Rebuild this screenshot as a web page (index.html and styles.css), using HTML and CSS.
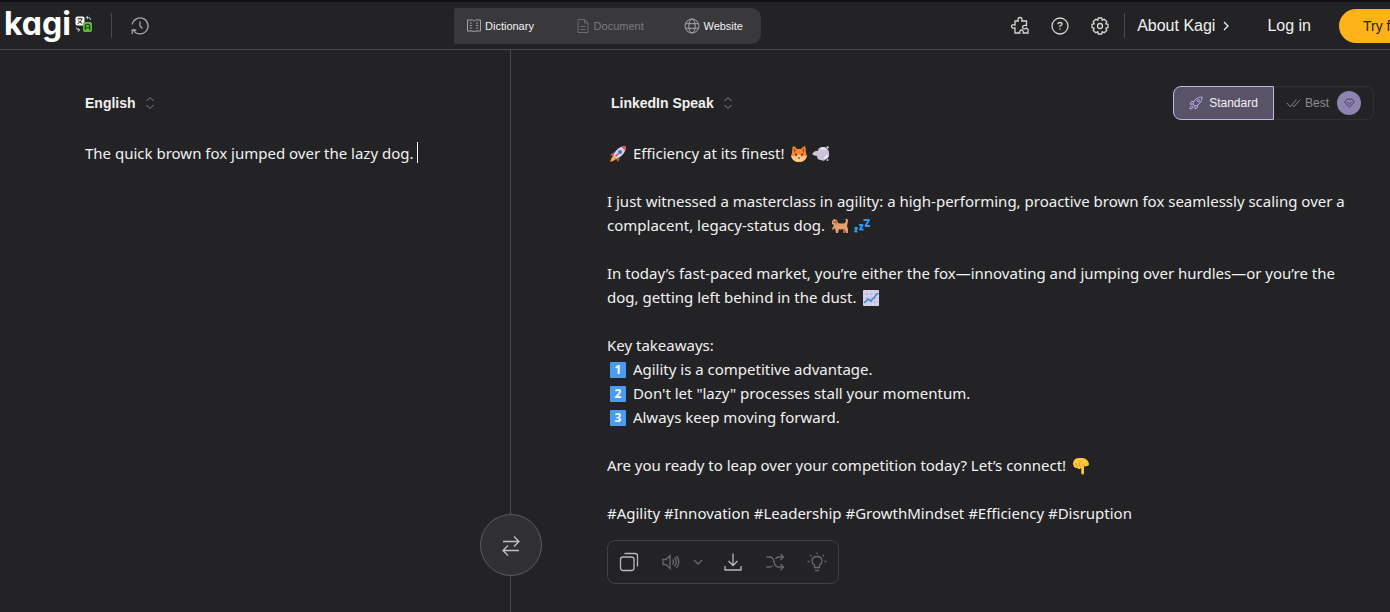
FILE: index.html
```html
<!DOCTYPE html>
<html lang="en">
<head>
<meta charset="UTF-8">
<meta name="viewport" content="width=device-width, initial-scale=1">
<title>Kagi Translate</title>
<link rel="stylesheet" href="styles.css">
</head>
<body>

<header class="topbar">
    <a class="logo" href="#" aria-label="Kagi Translate">
        <span class="logo-text">kagi</span>
        <svg class="logo-mark" viewBox="0 0 18 18">
            <rect x="0.5" y="1.5" width="9" height="9" rx="1.8" fill="#fff"/>
            <path d="M2.5 3.8h5M5 2.8v1M2.7 8.3c2.5-.5 3.6-2 3.9-4.3M3.5 5.4c.8 1.5 2 2.500 3.700 2.900" stroke="#222" stroke-width="1" fill="none"/>
            <rect x="8" y="7" width="9" height="10" rx="1.800" fill="#5fb83c"/>
            <path d="M10.200 15V11.500q0-2.300 2.300-2.300t2.300 2.300V15M10.200 12.700h4.600" stroke="#1e3a18" stroke-width="1.100" fill="none"/>
            <path d="M11.500 2.500h2q2 0 2 2.500M13 .8l-1.700 1.700L13 4.200M1.500 12.500q0 2.500 2.500 2.500M3 13.200L4.800 15 3 16.800" stroke="#ccc" stroke-width="1" fill="none"/>
        </svg>
    </a>
    <span class="rule"></span>
    <button class="icon-btn history" aria-label="History">
        <svg viewBox="0 0 20 20"><path d="M3.500 14.500A8 8 0 1 0 2.200 8.500M2.200 18v-4h4M10 5.500V10l2.500 2.500"/></svg>
    </button>

    <nav class="modes">
        <a href="#"><svg viewBox="0 0 16 16"><path d="M8 3.300C7.500 2.300 7 2 6 2H1.500v11H6c1 0 1.500.2 2 1 .5-.8 1-1 2-1h4.500V2H10c-1 0-1.500.3-2 1.300zM3.800 5h2M3.800 7.500h2M3.800 10h2M10.200 5h2M10.200 7.500h2M10.200 10h2"/></svg>Dictionary</a>
        <a href="#" class="off"><svg viewBox="0 0 16 16"><path d="M3 1.500h6.500L13 5v9.500H3zM9.500 1.500V5H13M5.500 8.500h5M5.500 11.500h5"/></svg>Document</a>
        <a href="#"><svg viewBox="0 0 16 16"><circle cx="8" cy="8" r="7"/><ellipse cx="8" cy="8" rx="3.200" ry="7"/><path d="M1.500 5.700h13M1.500 10.300h13"/></svg>Website</a>
    </nav>

    <div class="actions">
        <button class="icon-btn" aria-label="Extensions">
            <svg viewBox="0 0 20 20"><path d="M5 5h3.200C7.600 2.700 8.300 1.500 10 1.500s2.400 1.200 1.800 3.500H16.500v4.500c-2.300-.5-4 .3-4 1.700s1.700 2.300 3.300 1.300l.7-.5 1.500 1.500v3.500h-4.800c.3-2-.5-3-1.700-3s-2 1-1.700 3H5v-5c-2.300.6-3.500-.3-3.500-1.800S2.700 8.600 5 9z"/></svg>
        </button>
        <button class="icon-btn" aria-label="Help">
            <svg viewBox="0 0 20 20"><circle cx="10" cy="10" r="8"/><path d="M8 8.300q0-1.800 2-1.800t2 1.700q0 1-2 1.800v1.200M10 12.500v1.300"/></svg>
        </button>
        <button class="icon-btn" aria-label="Settings">
            <svg viewBox="0 0 20 20"><path d="M8.300 2h3.400l.5 2.200 2.100-1 2.500 2.500-1 2.100 2.200.5v3.400l-2.200.5 1 2.100-2.500 2.500-2.100-1-.5 2.200H8.300l-.5-2.200-2.100 1-2.500-2.500 1-2.100L2 11.700V8.300l2.200-.5-1-2.100 2.500-2.500 2.100 1z"/><circle cx="10" cy="10" r="2.500"/></svg>
        </button>
        <span class="rule"></span>
        <a class="link about" href="#">About Kagi<svg viewBox="0 0 8 10"><path d="M2 1l4 4-4 4"/></svg></a>
        <a class="link login" href="#">Log in</a>
        <button class="try">Try for free</button>
    </div>
</header>

<main class="translate">
    <section class="pane source">
        <div class="pane-head">
            <button class="lang">English<svg viewBox="0 0 10 14"><path d="M1.500 5L5 1.500 8.500 5M1.500 9L5 12.500 8.500 9"/></svg></button>
        </div>
        <div class="field">
            <textarea aria-label="Text to translate" spellcheck="false">The quick brown fox jumped over the lazy dog.</textarea>
            <span class="caret"></span>
        </div>
    </section>

    <section class="pane target">
        <div class="pane-head">
            <button class="lang">LinkedIn Speak<svg viewBox="0 0 10 14"><path d="M1.500 5L5 1.500 8.500 5M1.500 9L5 12.500 8.500 9"/></svg></button>
            <div class="quality">
                <button class="active"><svg viewBox="0 0 14 14"><path d="M4 8C5 4 8 1 13 1c0 5-3 8-7 9zM5 5.500H2.500L1 8.200l3-.2M8.500 9v2.500L6 13V10M1 13c0-2 .5-3 2-3s1.500 1.500 0 2.500z"/><circle cx="9.300" cy="4.700" r="1.200"/></svg>Standard</button>
                <button class="best"><svg viewBox="0 0 16 12"><path d="M1 6l3.500 4L11 2.500M7 8.500L8.500 10 15 2.500"/></svg>Best<span class="gem"><svg viewBox="0 0 14 14"><path d="M4 2.500h6L12.500 6 7 12 1.500 6zM4.500 6L7 8.200 9.500 6"/></svg></span></button>
            </div>
        </div>

        <div class="result">
            <p><svg class="emoji" viewBox="0 0 18 18"><path d="M5 7L1 10l3 1zM11 13l-2 4-2-3z" fill="#e9475d"/><path d="M4 11C6 5 11 1 17 1c0 6-4 11-10 13z" fill="#d6d3e5"/><path d="M12.500 2Q15 1 17 1q0 2.500-1 4.500z" fill="#ee4565"/><circle cx="11" cy="7" r="2" fill="#3978c9"/><path d="M4 11l3 3-2 1.500L1 17l1.500-4z" fill="#ffb02e"/><path d="M6 10.500L9 8l1 1-3 3z" fill="#e9475d"/></svg> Efficiency at its finest! <svg class="emoji" viewBox="0 0 18 18"><path d="M3 1q3 1 4 3h4q1-2 4-3 1 3 1 7l1 3q-2 6-8 6t-8-6l1-3q0-4 1-7z" fill="#f9862a"/><path d="M4 3l2 2-2 3zM14 3l-2 2 2 3z" fill="#9b4b32"/><path d="M1 11q3-1 5 1l3-3 3 3q2-2 5-1-2 6-8 6t-8-6z" fill="#ffc98c"/><circle cx="6" cy="9.500" r="1" fill="#402a32"/><circle cx="12" cy="9.500" r="1" fill="#402a32"/><path d="M7.500 12.500h3L9 14z" fill="#402a32"/></svg><svg class="emoji" viewBox="0 0 18 18"><path d="M0 9q3-4 6-3 0-4 5-4 3 0 3 2 3 0 3 4 1 5-3 6-2 3-5 1-4 0-4-4-3 0-5-2z" fill="#cdc4dc"/><path d="M9 4q4-2 5 1M12 13q3 0 3-3" stroke="#eee9f5" stroke-width="2" fill="none"/><circle cx="15.500" cy="2.500" r="1.200" fill="#ddd6e8"/><circle cx="15.500" cy="15" r="1" fill="#ddd6e8"/></svg></p>

            <p>I just witnessed a masterclass in agility: a high-performing, proactive brown fox seamlessly scaling over a complacent, legacy-status dog. <svg class="emoji" viewBox="0 0 18 18"><path d="M1 4l2-2 3 1 1 3q4 1 7 0 1-1 1-3l-1-1q3-1 3 2l-1 5 1 3v4h-2l-1-3-2-1q-2 1-4 0l-1 4H5l-1-5-2 2-1-1 2-4-2-1z" fill="#e5a06e"/><path d="M4 3l2 1v4L4 6zM12 12l2 1v3h-2z" fill="#b86b49"/><circle cx="3" cy="5" r=".7" fill="#3c2925"/></svg><svg class="emoji" viewBox="0 0 18 18"><path d="M10.500 3H16l-3.500 6H17M6 8h3.500L7 12.500h3.500M1.500 11H4l-2 3.500h2.500" stroke="#3097ea" stroke-width="2" stroke-linejoin="round" fill="none"/></svg></p>

            <p>In today’s fast-paced market, you’re either the fox—innovating and jumping over hurdles—or you’re the dog, getting left behind in the dust. <svg class="emoji" viewBox="0 0 18 18"><rect x="1" y="1" width="16" height="16" rx="1" fill="#d9d5ed"/><path d="M5 1v16M9 1v16M13 1v16M1 5h16M1 9h16M1 13h16" stroke="#b9b2d4" stroke-width=".7"/><path d="M2 14l4-4 3 2 7-8" stroke="#398bd4" stroke-width="1.700" fill="none"/></svg></p>

            <p>Key takeaways:<br>
            <span class="keycap">1</span> Agility is a competitive advantage.<br>
            <span class="keycap">2</span> Don't let "lazy" processes stall your momentum.<br>
            <span class="keycap">3</span> Always keep moving forward.</p>

            <p>Are you ready to leap over your competition today? Let’s connect! <svg class="emoji" viewBox="0 0 18 18"><path d="M1 6q1-5 6-5h4q5 1 6 6 0 2-2 2l-3 .5V16q0 1.500-1.300 1.500T9.300 16v-5Q7 13 5 11 1 11 1 6z" fill="#ffc83d"/><path d="M4 6q0 3 2 4M7 5q-.5 4 2 5M12 9.500q-1-2 1-3" stroke="#db9227" stroke-width=".9" fill="none"/></svg></p>

            <p>#Agility #Innovation #Leadership #GrowthMindset #Efficiency #Disruption</p>
        </div>

        <div class="tools">
            <button aria-label="Copy"><svg viewBox="0 0 20 20"><rect x="1.500" y="5" width="13.500" height="13.500" rx="2.500"/><path d="M5.500 1.500H16q2.500 0 2.500 2.500v10.500"/></svg></button>
            <button class="dim" aria-label="Listen"><svg viewBox="0 0 20 20"><path d="M2 7.500h3L9 3.500v13l-4-4H2zM11.500 7.500q2 2.500 0 5M13.500 5.500q3.500 4.500 0 9M15.500 4q4.500 6 0 12"/></svg></button>
            <button class="dim narrow" aria-label="Voice options"><svg viewBox="0 0 10 10"><path d="M1 3l4 4 4-4"/></svg></button>
            <button aria-label="Download"><svg viewBox="0 0 20 20"><path d="M10 1.500v12M5.500 9l4.500 4.500L14.500 9M2 14v4h16v-4"/></svg></button>
            <button class="dim" aria-label="Alternatives"><svg viewBox="0 0 20 20"><path d="M1.500 5H5q2.500 0 3.500 3l1 3.500q1 3.500 4 3.500h5M1.500 15H5q1.500 0 2.500-1.500M10.500 7q1-2 3-2h5M15.500 2l3 3-3 3M15.500 12l3 3-3 3"/></svg></button>
            <button class="dim" aria-label="Explain"><svg viewBox="0 0 20 20"><path d="M7.500 15.500v-2.500Q5 11.500 5 9q0-4.500 5-4.500T15 9q0 2.500-2.500 4v2.500zM8 18.500h4M10 .5v1.500M3 3l1.300 1.300M17 3l-1.300 1.300M.5 9.500H2.500M17.500 9.500h2"/></svg></button>
        </div>
    </section>

    <button class="swap" aria-label="Swap languages">
        <svg viewBox="0 0 20 24"><path d="M2 8.500h16M13 3.500l5 5-5 5M18 17.500H2M7 12.500l-5 5 5 5"/></svg>
    </button>
</main>

</body>
</html>
```
FILE: styles.css
```css
*{
    box-sizing:border-box;
}

body{
    margin:0;
    min-height:100vh;
    display:flex;
    flex-direction:column;
    background:#232325;
    color:#f1f1f1;
    font-family:"Liberation Sans", Arial, sans-serif;
}

button{
    padding:0;
    border:none;
    background:none;
    color:inherit;
    font-family:inherit;
    cursor:pointer;
}

a{
    color:inherit;
    text-decoration:none;
}

svg{
    flex:none;
    fill:none;
    stroke:currentColor;
    stroke-width:1.3;
}

/* header */

.topbar{
    display:flex;
    align-items:center;
    height:50px;
    border-top:2px solid #111113;
    border-bottom:1px solid #4b4b4e;
    overflow:hidden;
}

.logo{
    display:flex;
    align-items:center;
    gap:4px;
    width:111px;
    padding:0 0 4px 4px;
}

.logo-text{
    font-family:Inter, sans-serif;
    font-size:32px;
    font-weight:700;
    line-height:40px;
    font-feature-settings:"cv11";
    color:#fff;
}

.logo-mark{
    width:18px;
    height:18px;
    stroke:none;
}

.rule{
    width:1px;
    height:25px;
    background:#4b4b4e;
}

.icon-btn{
    display:flex;
    color:#d6d6d6;
}

.icon-btn svg{
    width:20px;
    height:20px;
}

.history{
    margin-left:18px;
    color:#a5a5a8;
}

.modes{
    display:flex;
    align-items:center;
    justify-content:space-between;
    width:307px;
    height:36px;
    margin-left:304px;
    padding:0 18px 0 12px;
    border-radius:2px 10px 10px 2px;
    background:#39393c;
    font-size:11px;
}

.modes a{
    display:flex;
    align-items:center;
    gap:3px;
}

.modes svg{
    width:16px;
    height:16px;
    stroke:#a5a5a8;
    stroke-width:1;
}

.modes .off{
    color:#7c7c7f;
}

.modes .off svg{
    stroke:#6c6c6f;
}

.actions{
    display:flex;
    align-items:center;
    flex:none;
    gap:20px;
    margin-left:auto;
    margin-right:-79px;
}

.actions .rule{
    margin:0 -8px 0 -6px;
}

.link{
    display:flex;
    align-items:center;
    font-size:16px;
}

.about{
    gap:7px;
}

.about svg{
    width:8px;
    height:10px;
}

.login{
    margin-left:17px;
}

.try{
    width:130px;
    height:34px;
    margin-left:8px;
    padding-left:24px;
    border-radius:17px;
    background:#ffb319;
    color:#232325;
    font-size:14px;
    text-align:left;
}

/* two panes */

.translate{
    position:relative;
    flex:1;
    display:grid;
    grid-template-columns:511fr 879fr;
}

.pane{
    padding:36px 16px 28px 85px;
}

.source{
    display:flex;
    flex-direction:column;
    border-right:1px solid #4b4b4e;
}

.target{
    padding-left:96px;
}

.pane-head{
    display:flex;
    align-items:center;
    justify-content:space-between;
    height:34px;
    margin-bottom:21px;
}

.lang{
    display:flex;
    align-items:center;
    gap:9px;
    font-size:14px;
    font-weight:bold;
}

.target .lang{
    padding-left:4px;
}

.lang svg{
    width:10px;
    height:14px;
    stroke:#858588;
    stroke-width:1;
}

.field{
    position:relative;
    flex:1;
}

.field textarea,
.result{
    font-family:"Noto Sans", "Open Sans", sans-serif;
    font-size:15px;
    line-height:24px;
}

.field textarea{
    display:block;
    width:100%;
    height:100%;
    padding:0;
    border:none;
    outline:none;
    resize:none;
    background:none;
    color:inherit;
}

.caret{
    position:absolute;
    top:1px;
    left:332px;
    width:1px;
    height:21px;
    background:#fff;
}

.result{
    padding-right:16px;
}

.result p{
    margin:0 0 24px;
}

.result p:last-child{
    margin-bottom:0;
}

.emoji{
    width:18px;
    height:18px;
    margin:0 2px;
    vertical-align:-4px;
    stroke:none;
}

.keycap{
    display:inline-block;
    width:16px;
    height:16px;
    margin:0 3px;
    border-radius:1px;
    background:#4a9bf5;
    color:#fff;
    font-size:12px;
    font-weight:bold;
    line-height:16px;
    text-align:center;
    vertical-align:1px;
}

/* standard / best */

.quality{
    display:flex;
    width:201px;
    height:34px;
    font-size:12px;
}

.quality button{
    display:flex;
    align-items:center;
    justify-content:center;
    width:101px;
    gap:6px;
    font-size:12px;
}

.quality .active{
    border:1px solid #c4b4f2;
    border-radius:8px 0 0 8px;
    background:#595368;
}

.active svg{
    width:14px;
    height:14px;
    stroke:#b9a9e8;
    stroke-width:1;
}

.quality .best{
    width:100px;
    gap:4px;
    border:1px solid #303033;
    border-left:none;
    border-radius:0 8px 8px 0;
    color:#8e8e91;
}

.best svg{
    width:15px;
    height:12px;
    stroke-width:1;
}

.gem{
    display:flex;
    align-items:center;
    justify-content:center;
    width:24px;
    height:24px;
    margin-left:4px;
    border-radius:50%;
    background:#8d84b1;
}

.gem svg{
    stroke:#3b3653;
}

/* result toolbar */

.tools{
    display:flex;
    align-items:center;
    justify-content:space-between;
    width:232px;
    height:44px;
    margin-top:15px;
    padding:0 11px;
    border:1px solid #414144;
    border-radius:8px;
}

.tools button{
    display:flex;
    color:#b8b8ba;
}

.tools svg{
    width:20px;
    height:20px;
}

.tools .dim{
    color:#69696c;
}

.tools .narrow{
    margin:0 -2px 0 -10px;
}

.tools .narrow svg{
    width:10px;
    height:10px;
}

.swap{
    position:absolute;
    left:calc(511 / 1390 * 100%);
    bottom:36px;
    display:flex;
    align-items:center;
    justify-content:center;
    width:62px;
    height:62px;
    margin-left:-31px;
    border:1px solid #5b5b5e;
    border-radius:50%;
    background:#303033;
    color:#c2c2c4;
}

.swap svg{
    width:20px;
    height:24px;
}
```
